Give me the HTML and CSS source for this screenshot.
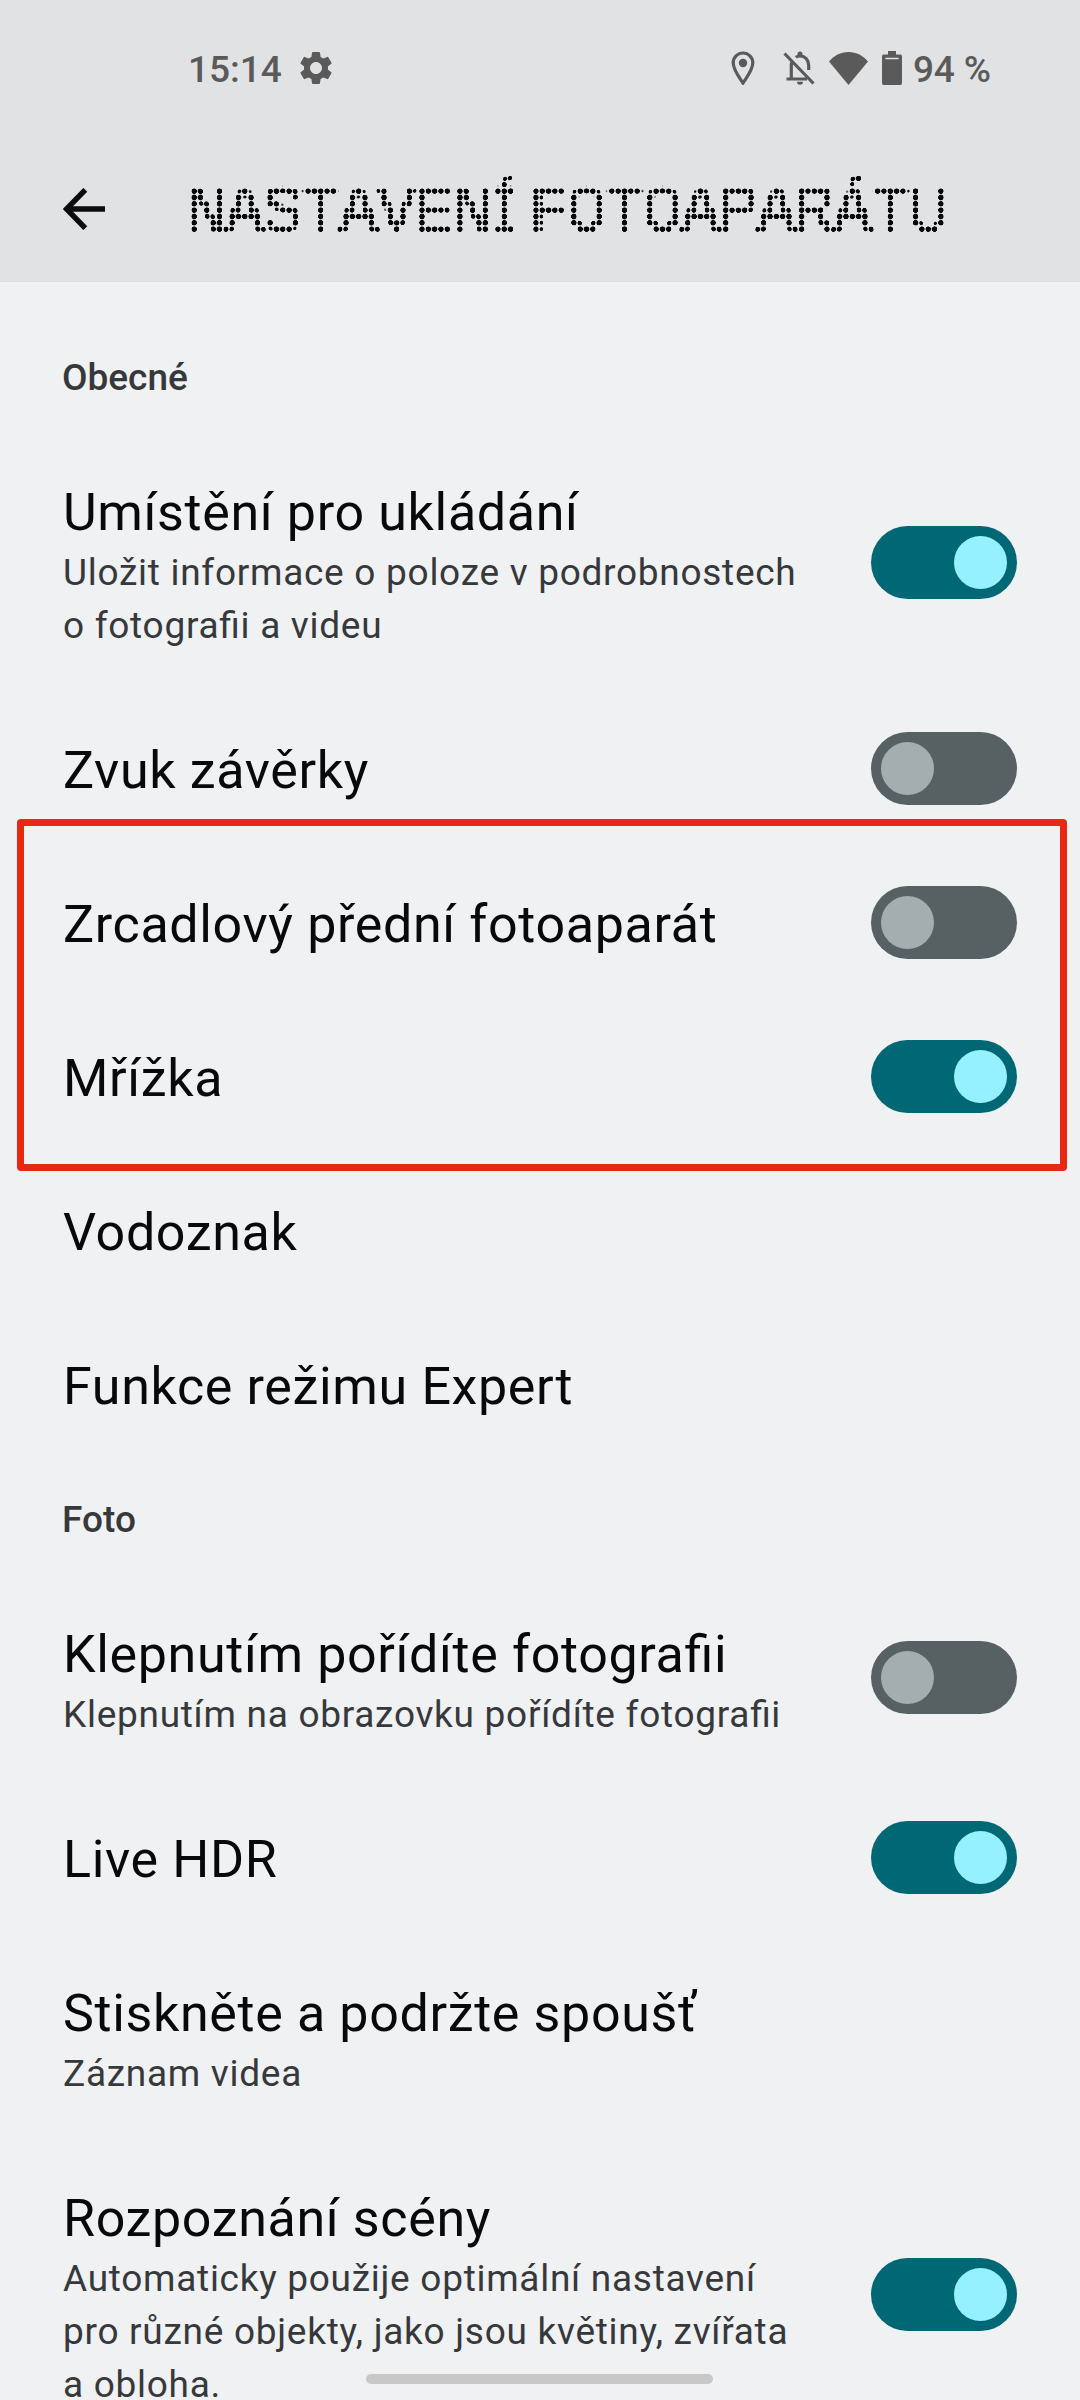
FILE: index.html
```html
<!DOCTYPE html>
<html lang="cs">
<head>
<meta charset="utf-8">
<title>Nastavení fotoaparátu</title>
<link rel="stylesheet" href="styles.css">
</head>
<body>
<div class="screen">
  <header class="top">
    <div class="status">
      <span class="time">15:14</span>
      <svg class="gear" viewBox="0 0 24 24"><path d="M19.14 12.94c.04-.3.06-.61.06-.94 0-.32-.02-.64-.07-.94l2.03-1.58c.18-.14.23-.41.12-.61l-1.92-3.32c-.12-.22-.37-.29-.59-.22l-2.39.96c-.5-.38-1.03-.7-1.62-.94l-.36-2.54c-.04-.24-.24-.41-.48-.41h-3.84c-.24 0-.43.17-.47.41l-.36 2.54c-.59.24-1.13.57-1.62.94l-2.39-.96c-.22-.08-.47 0-.59.22L2.74 8.87c-.12.21-.08.47.12.61l2.03 1.58c-.05.3-.09.63-.09.94s.02.64.07.94l-2.03 1.58c-.18.14-.23.41-.12.61l1.92 3.32c.12.22.37.29.59.22l2.39-.96c.5.38 1.03.7 1.62.94l.36 2.54c.05.24.24.41.48.41h3.84c.24 0 .44-.17.47-.41l.36-2.54c.59-.24 1.13-.56 1.62-.94l2.39.96c.22.08.47 0 .59-.22l1.92-3.32c.12-.22.07-.47-.12-.61l-2.01-1.58zM12 15.6c-1.98 0-3.6-1.62-3.6-3.6s1.62-3.6 3.6-3.6 3.6 1.62 3.6 3.6-1.62 3.6-3.6 3.6z"/></svg>
      <span class="grow"></span>
      <svg class="pin" viewBox="0 0 24 34"><path class="line" d="M12 32C9 27.500 2.200 19 2.200 11.800a9.800 9.800 0 0 1 19.600 0C21.800 19 15 27.500 12 32z"/><circle cx="12" cy="12" r="4.200"/></svg>
      <svg class="bell" viewBox="0 0 32 34"><path class="line" d="M8.300 28V14.500q0-2.600 1.200-4.700M12.800 6.300Q14.600 5 17 5c5.400 0 8.700 4.300 8.700 9.500V19M3.500 28H24M1.500 2.500l29 30"/><path d="M14.500 4.500V3a2.500 2.500 0 0 1 5 0v1.500zM14 30.700h6a3 3 0 0 1-6 0z"/></svg>
      <svg class="wifi" viewBox="0 0 39 33"><path d="M0 9.500C5 3.800 11.500 0 19.500 0S34 3.800 39 9.500L19.500 33z"/></svg>
      <svg class="battery" viewBox="0 0 20 34"><path d="M6 0h8v3.500h4.300Q20 3.500 20 5.200V6.700H0V5.200Q0 3.500 1.700 3.500H6zM0 8.200h20v24q0 1.800-1.800 1.800H1.800Q0 34 0 32.200z"/><path d="M0 6h3.500v3H0zM16.500 6H20v3h-3.500z"/></svg>
      <span class="percent">94 %</span>
    </div>
    <div class="bar">
      <svg class="back" viewBox="0 0 42 42"><path d="M22.300 1.800 3.500 21l18.800 19.200M3.500 21H42"/></svg>
      <div class="dots"><h1 class="title">NASTAVEN<span class="narrow">Í</span> FOTOAPARÁTU</h1></div>
    </div>
  </header>
  <main class="list">
    <h2 class="section">Obecné</h2>
    <div class="row three"><div class="text"><div class="name">Umístění pro ukládání</div><div class="sub">Uložit informace o poloze v podrobnostech<br>o fotografii a videu</div></div><div class="switch on"></div></div>
    <div class="row"><div class="text"><div class="name">Zvuk závěrky</div></div><div class="switch"></div></div>
    <div class="group">
      <div class="row"><div class="text"><div class="name">Zrcadlový přední fotoaparát</div></div><div class="switch"></div></div>
      <div class="row"><div class="text"><div class="name">Mřížka</div></div><div class="switch on"></div></div>
      <div class="highlight"></div>
    </div>
    <div class="row"><div class="text"><div class="name">Vodoznak</div></div></div>
    <div class="row"><div class="text"><div class="name">Funkce režimu Expert</div></div></div>
    <h2 class="section">Foto</h2>
    <div class="row two"><div class="text"><div class="name">Klepnutím pořídíte fotografii</div><div class="sub">Klepnutím na obrazovku pořídíte fotografii</div></div><div class="switch"></div></div>
    <div class="row"><div class="text"><div class="name">Live HDR</div></div><div class="switch on"></div></div>
    <div class="row two"><div class="text"><div class="name">Stiskněte a podržte spoušť</div><div class="sub">Záznam videa</div></div></div>
    <div class="row four"><div class="text"><div class="name">Rozpoznání scény</div><div class="sub">Automaticky použije optimální nastavení<br>pro různé objekty, jako jsou květiny, zvířata<br>a obloha.</div></div><div class="switch on"></div></div>
  </main>
  <div class="home"></div>
</div>
<svg class="defs" width="0" height="0"><filter id="round-dots" x="-2%" y="-10%" width="104%" height="120%" color-interpolation-filters="sRGB"><feGaussianBlur stdDeviation="1.3"/><feComponentTransfer><feFuncA type="linear" slope="14" intercept="-0.9"/></feComponentTransfer></filter></svg>
</body>
</html>
```
FILE: styles.css
```css
* { box-sizing: border-box; }
body { margin: 0; background: #eff1f3; font-family: Roboto, sans-serif; }
.screen { position: relative; width: 1080px; height: 2400px; overflow: hidden; background: #eff1f3; }
.defs { display: block; position: absolute; top: 0; }
.top { height: 282px; background: #e1e2e4; border-bottom: 1px solid #dcdddf; }
.status { height: 136px; padding: 0 89px 0 188px; display: flex; align-items: center; color: #5a5a5b; font-size: 37px; font-weight: 500; }
.status svg { fill: currentColor; flex: none; }
.status .line { fill: none; stroke: currentColor; stroke-width: 3.2; }
.time, .percent { padding-top: 2px; }
.grow { flex: 1; }
.gear { width: 40px; height: 40px; margin-left: 14px; }
.pin { width: 24px; height: 34px; }
.bell { width: 32px; height: 34px; margin-left: 28px; }
.wifi { width: 39px; height: 33px; margin-left: 14px; }
.battery { width: 20px; height: 34px; margin-left: 14px; }
.percent { margin-left: 11px; letter-spacing: -0.1px; }
.bar { height: 145px; padding-left: 63px; display: flex; align-items: flex-start; }
.back { width: 42px; height: 42px; margin-top: 52px; fill: none; stroke: #0b0c0e; stroke-width: 5.4; flex: none; }
/* Dot-matrix title: monospaced letters are sampled on a 6.333px grid, then each sample is rounded into a dot */
.dots { margin: 32.900px 0 0 85.830px; filter: url(#round-dots); }
.title {
  margin: 0; height: 88.667px; width: 800px; text-indent: -4px;
  font: 400 66px/90px "Liberation Mono", monospace;
  letter-spacing: -1.608px; word-spacing: -38px; white-space: nowrap;
  color: #08090b; -webkit-text-stroke: 1.400px #08090b;
  -webkit-mask: radial-gradient(circle at center, #000 1.300px, transparent 1.800px) 0 0 / 6.3333px 6.3333px;
  mask: radial-gradient(circle at center, #000 1.300px, transparent 1.800px) 0 0 / 6.3333px 6.3333px;
}
.narrow { display: inline-block; text-indent: 0; width: 38px; margin: 0 6.333px 0 -6.333px; transform: scaleX(0.6); transform-origin: 19.800px 50%; -webkit-text-stroke-width: 2.500px; }
.list { padding-top: 38px; }
.section { margin: 0; height: 113.500px; padding: 36px 62px 0; font-size: 37px; line-height: 44px; font-weight: 500; color: #36383b; }
.row { height: 154px; padding: 0 63px; display: flex; align-items: center; justify-content: space-between; }
.two { height: 205px; }
.three { height: 258px; }
.four { height: 311px; }
.text { align-self: flex-start; padding-top: 48.500px; white-space: nowrap; font-feature-settings: "liga" 1; }
.name { font-size: 52px; line-height: 61px; letter-spacing: 0.640px; color: #08090b; }
.sub { margin-top: 3px; font-size: 37px; line-height: 53px; letter-spacing: 0.720px; color: #36383b; }
.switch { width: 146px; height: 73px; padding: 10px; border-radius: 37px; background: #576062; display: flex; }
.switch::before { content: ""; width: 53px; height: 53px; border-radius: 50%; background: #a4adb0; }
.switch.on { background: #006874; justify-content: flex-end; }
.switch.on::before { background: #95f1ff; }
.group { position: relative; }
.highlight { position: absolute; left: 17px; top: -26.500px; width: 1050px; height: 352px; border: 7px solid #e92813; border-radius: 4px; }
.home { position: absolute; left: 366px; top: 2374px; width: 347px; height: 10px; border-radius: 5px; background: #c8c8c8; }
```
